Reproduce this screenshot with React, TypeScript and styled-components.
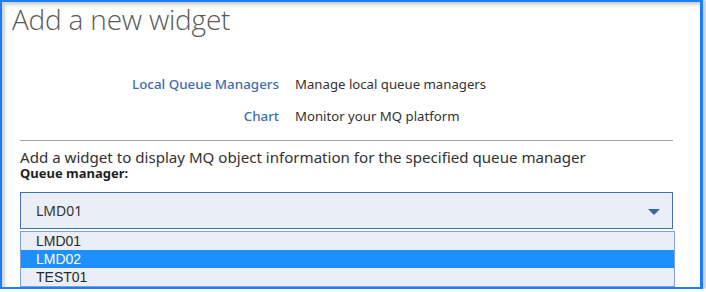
import React, { FC } from 'react';
import styled, { createGlobalStyle } from 'styled-components';

const GlobalStyle = createGlobalStyle`
    html, body {
        margin: 0;
        padding: 0;
        background: #ffffff;
    }
    body {
        font-family: 'Noto Sans', 'Open Sans', sans-serif;
        color: #323232;
    }
`;

const Frame = styled.div`
    box-sizing: border-box;
    width: 703px;
    height: 289px;
    border: 2px solid #1a7ff2;
    border-right-width: 3px;
    box-shadow: inset 3px 3px 3px rgba(0, 0, 0, 0.18), 3px 0 2px rgba(0, 0, 0, 0.2);
    overflow: hidden;
    background: #ffffff;
`;

const Title = styled.h1`
    margin: 0;
    padding: 0 0 0 10px;
    height: 34px;
    font-family: 'Open Sans', sans-serif;
    font-weight: 300;
    font-size: 28px;
    line-height: 34px;
    color: #5a5a5a;
    letter-spacing: -0.2px;
`;

const Body = styled.div`
    padding: 0 27px 0 18px;
`;

const Links = styled.div`
    display: grid;
    grid-template-columns: 259px auto;
    column-gap: 16px;
    row-gap: 14px;
    padding-top: 39px;
    align-items: center;
`;

const LinkName = styled.a`
    justify-self: end;
    font-size: 13.4px;
    line-height: 18px;
    font-weight: 500;
    color: #3d6db3;
    text-decoration: none;
    cursor: pointer;
`;

const LinkText = styled.span`
    font-size: 13.2px;
    line-height: 18px;
    color: #323232;
`;

const Rule = styled.hr`
    margin: 15px 0 0;
    border: none;
    border-top: 1px solid #a3a3a3;
`;

const Intro = styled.p`
    margin: 7px 0 0;
    font-size: 15.1px;
    line-height: 18px;
    color: #323232;
`;

const Label = styled.label`
    display: block;
    font-size: 13px;
    line-height: 15px;
    font-weight: 700;
    color: #1f1f1f;
`;

const SelectBox = styled.div`
    box-sizing: border-box;
    margin-top: 11px;
    height: 37px;
    display: flex;
    align-items: center;
    justify-content: space-between;
    padding: 0 12px 0 15px;
    border: 1.5px solid #4270b4;
    background: #e9eef7;
    font-size: 14px;
    color: #323232;
`;

const Arrow = styled.svg`
    width: 12px;
    height: 6px;
    margin-top: 3px;
`;

const Options = styled.ul`
    box-sizing: border-box;
    list-style: none;
    margin: 2px -2px 0 0;
    padding: 0;
    border: 1px solid #7fa1d9;
    background: #eaeef7;
    font-family: 'Liberation Sans', Arial, sans-serif;
`;

const Option = styled.li<{ $active?: boolean }>`
    height: 18px;
    line-height: 18px;
    padding-left: 15px;
    font-size: 14px;
    background: ${({ $active }) => ($active ? '#1e8ffe' : 'transparent')};
    color: ${({ $active }) => ($active ? '#ffffff' : '#2a2a2a')};
`;

const options = ['LMD01', 'LMD02', 'TEST01'];

const App: FC = () => {
    return (
        <>
            <GlobalStyle />
            <Frame>
                <Title>Add a new widget</Title>
                <Body>
                    <Links>
                        <LinkName>Local Queue Managers</LinkName>
                        <LinkText>Manage local queue managers</LinkText>
                        <LinkName>Chart</LinkName>
                        <LinkText>Monitor your MQ platform</LinkText>
                    </Links>
                    <Rule />
                    <Intro>Add a widget to display MQ object information for the specified queue manager</Intro>
                    <Label>Queue manager:</Label>
                    <SelectBox>
                        <span>LMD01</span>
                        <Arrow viewBox="0 0 12 6">
                            <path d="M0 0 L12 0 L6 6 Z" fill="#3b67ae" />
                        </Arrow>
                    </SelectBox>
                    <Options>
                        {options.map((o) => (
                            <Option key={o} $active={o === 'LMD02'}>
                                {o}
                            </Option>
                        ))}
                    </Options>
                </Body>
            </Frame>
        </>
    );
};

export default App;
